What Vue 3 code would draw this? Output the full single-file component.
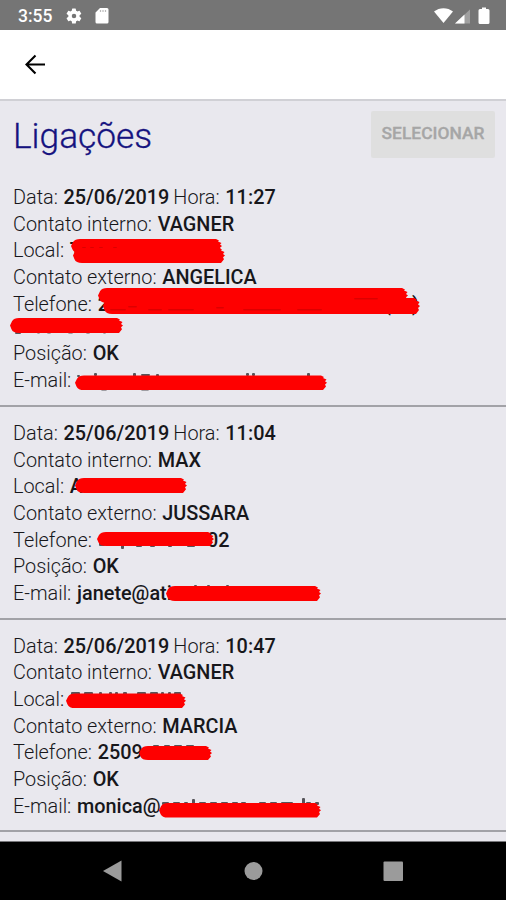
<script setup>
const calls = [
    {
        rows: [
            [['Data:', '25/06/2019'], ['Hora:', '11:27']],
            [['Contato interno:', 'VAGNER']],
            [['Local:', 'T']],
            [['Contato externo:', 'ANGELICA']],
            [['Telefone:', '2']],
            [['Posição:', 'OK']],
            [['E-mail:', '']],
        ],
        double: 4,
        glyphs: [[384, 140, '('], [412, 140, ')']],
        // x, y, width, height of the ink that stays visible around a stroke
        specks: [
            [403, 127, 5, 2], [15, 161, 6, 2], [37, 161, 3, 1.5], [47, 161, 4, 1.5], [68, 161, 5, 1.5],
            [86, 161, 4, 1.5], [103, 161, 3, 1.5], [77, 204, 3, 2], [94, 202, 3, 3], [101, 216, 6, 3.5], [133, 202, 3, 4],
            [141, 203, 9, 2], [141, 216, 8, 3.5], [156, 203, 3, 3], [246, 202, 3, 3], [252, 202, 3, 3], [307, 202, 3, 4],
        ],
        faint: [[110, 138, 16, 1.5], [128, 135, 9, 1.5], [148, 138, 14, 1.5], [168, 138, 26, 1.5], [216, 136, 8, 1.5], [243, 138, 38, 1.5], [297, 138, 25, 1.5], [354, 127, 24, 1.5], [82, 76, 4, 1], [90, 76, 4, 1], [99, 76, 4, 1], [113, 76, 4, 1]],
        strokes: [[71, 68, 151, 14], [73, 77, 152, 15], [98, 117, 310, 15], [103, 127, 317, 16], [10, 147, 113, 15], [75, 204.5, 252, 14.5]],
    },
    {
        rows: [
            [['Data:', '25/06/2019'], ['Hora:', '11:04']],
            [['Contato interno:', 'MAX']],
            [['Local:', 'A']],
            [['Contato externo:', 'JUSSARA']],
            [['Telefone:', '']],
            [['Posição:', 'OK']],
            [['E-mail:', 'janete@ati']],
        ],
        double: -1,
        glyphs: [[207, 140, '02']],
        specks: [
            [99, 135, 6, 4], [121, 137, 3, 5], [136, 138, 6, 2], [150, 138, 5, 2], [168, 138, 4, 2],
            [187, 138, 8, 2], [194, 178, 3, 3], [207, 178, 3, 3], [226, 178, 3, 3], [298, 179, 3, 2],
        ],
        faint: [],
        strokes: [[75, 71, 112, 15], [97, 125, 117, 14], [166, 179, 155, 15]],
    },
    {
        rows: [
            [['Data:', '25/06/2019'], ['Hora:', '10:47']],
            [['Contato interno:', 'VAGNER']],
            [['Local:', '']],
            [['Contato externo:', 'MARCIA']],
            [['Telefone:', '2509']],
            [['Posição:', 'OK']],
            [['E-mail:', 'monica@']],
        ],
        double: -1,
        glyphs: [],
        specks: [
            [71, 72, 9, 3], [84, 72, 9, 3], [99, 72, 3, 3], [109, 72, 3, 3], [115, 72, 3, 3], [123, 72, 4, 3], [137, 72, 9, 3],
            [150, 72, 8, 3], [161, 72, 3, 3], [168, 72, 3, 3], [174, 72, 7, 3], [153, 125, 6, 2], [164, 125, 6, 2], [174, 125, 8, 2],
            [186, 125, 8, 2], [162, 182, 7, 3], [173, 182, 7, 3], [184, 182, 4, 3], [192, 179, 3, 5], [199, 182, 7, 3], [210, 182, 7, 3],
            [221, 182, 7, 3], [232, 182, 6, 3], [241, 182, 5, 3], [259, 182, 7, 3], [270, 182, 7, 3], [281, 182, 12, 3], [302, 178, 3, 7],
            [306, 182, 5, 3], [315, 182, 4, 3],
        ],
        faint: [],
        strokes: [[66, 73.5, 120, 14.5], [139, 126, 73, 14], [159, 183, 162, 14.5]],
    },
]

// marker stroke: soft on the left, frayed on the right
function stroke([x, y, w, h]) {
    const r = x + w
    return `M${x} ${y + h * 0.5} L${x + 2} ${y + h * 0.22} Q${x + 4} ${y} ${x + 9} ${y} L${r - 6} ${y}`
        + ` L${r - 3} ${y + 1.5} L${r - 4} ${y + 2.5} L${r - 0.5} ${y + 4} L${r - 2} ${y + h * 0.4}`
        + ` L${r} ${y + h * 0.5} L${r - 2} ${y + h * 0.62} L${r - 1} ${y + h * 0.75} L${r - 4} ${y + h}`
        + ` L${x + 9} ${y + h} Q${x + 3} ${y + h} ${x + 1.5} ${y + h * 0.75} Z`
}
</script>

<template>
    <div class="phone">
        <div class="status">
            <span class="time">3:55</span>
            <svg class="gear" width="18" height="18" viewBox="0 0 24 24">
                <path fill="#fff" fill-rule="evenodd" d="M19.4 13a7.500 7.500 0 0 0 0-2l2.100-1.600a.5.5 0 0 0 .1-.6l-2-3.500a.5.5 0 0 0-.6-.2l-2.500 1a7.300 7.300 0 0 0-1.700-1l-.4-2.600a.5.5 0 0 0-.5-.5h-4a.5.5 0 0 0-.5.500L9 5.100a7.700 7.700 0 0 0-1.700 1l-2.500-1a.5.5 0 0 0-.6.200l-2 3.500a.5.5 0 0 0 .1.600L4.500 11a7.900 7.900 0 0 0 0 2l-2.200 1.600a.5.5 0 0 0-.1.600l2 3.500c.1.200.4.300.6.200l2.500-1a7.300 7.300 0 0 0 1.700 1l.4 2.600c0 .3.200.5.5.500h4c.3 0 .5-.2.5-.5l.4-2.600a7.700 7.700 0 0 0 1.700-1l2.500 1c.2.1.5 0 .6-.2l2-3.500a.5.5 0 0 0-.1-.6zM12 15a3 3 0 1 1 0-6 3 3 0 0 1 0 6z" />
            </svg>
            <svg class="card" width="14" height="16" viewBox="0 0 14 16">
                <path fill="#fff" d="M5 0h7a1.500 1.500 0 0 1 1.500 1.500v12.500a1.500 1.500 0 0 1-1.500 1.500H2a1.500 1.500 0 0 1-1.500-1.500V4.500z" />
                <path stroke="#bbb" stroke-width="1.200" d="M5.500 2v2M8 2v2M10.500 2v2" />
            </svg>
            <svg class="signals" width="58" height="20" viewBox="0 0 58 20">
                <path fill="#fff" d="M0 5.500C5.500 1 13.500 1 19 5.500L9.500 17z" />
                <path fill="#a0a0a0" d="M36 3.500v14H21z" />
                <path fill="#fff" d="M30.500 8.600v8.900H21z" />
                <path fill="#fff" d="M48 1.500h4v1.500h2a1.500 1.500 0 0 1 1.500 1.500v12a1.500 1.500 0 0 1-1.500 1.500h-8a1.500 1.500 0 0 1-1.500-1.500V4.500a1.500 1.500 0 0 1 1.500-1.500h2z" />
            </svg>
        </div>
        <div class="toolbar">
            <svg width="22" height="22" viewBox="0 0 22 22">
                <path fill="none" stroke="#000" stroke-width="2.100" d="M21 10.500H3M11.500 1.500l-9 9 9 9" />
            </svg>
        </div>
        <main>
            <div class="heading">
                <h1>Ligações</h1>
                <button disabled>SELECIONAR</button>
            </div>
            <div v-for="(call, i) in calls" :key="i" class="call">
                <p v-for="(row, j) in call.rows" :key="j" :class="{ double: j === call.double }">
                    <template v-for="(field, k) in row" :key="k">{{ field[0] }} <b>{{ field[1] }}</b>{{ ' ' }}</template>
                </p>
                <svg class="marker" width="506" height="236" viewBox="0 0 506 236">
                    <text v-for="g in call.glyphs" :key="g[0]" :x="g[0]" :y="g[1]">{{ g[2] }}</text>
                    <rect v-for="(s, n) in call.specks" :key="'s' + n" class="speck" :x="s[0]" :y="s[1]" :width="s[2]" :height="s[3]" rx="1" />
                    <path v-for="(s, n) in call.strokes" :key="'p' + n" class="ink" :d="stroke(s)" />
                    <rect v-for="(s, n) in call.faint" :key="'f' + n" class="faint" :x="s[0]" :y="s[1]" :width="s[2]" :height="s[3]" rx="1" />
                </svg>
            </div>
        </main>
        <nav>
            <svg width="506" height="58" viewBox="0 0 506 58">
                <path fill="#9b9b9b" d="M103 29L121.500 18.500v21z" />
                <circle fill="#9b9b9b" cx="253.500" cy="29" r="9" />
                <rect fill="#9b9b9b" x="383.500" y="19.500" width="19.500" height="19.500" rx="1" />
            </svg>
        </nav>
    </div>
</template>

<style>
body {
    background: #e9e8ee;
}
</style>

<style scoped>
.phone {
    display: flex;
    flex-direction: column;
    width: 506px;
    height: 900px;
    overflow: hidden;
    font-family: Roboto, sans-serif;
    color: #17171b;
    background: #e9e8ee;
}

.status {
    display: flex;
    align-items: center;
    box-sizing: border-box;
    flex: none;
    height: 30px;
    padding: 1px 14px 0 18px;
    background: #757575;
    color: #fff;
}

.time {
    width: 47px;
    font-size: 17.500px;
    font-weight: 500;
}

.card {
    margin-left: 12px;
}

.signals {
    margin-left: auto;
}

.toolbar {
    display: flex;
    align-items: center;
    box-sizing: border-box;
    flex: none;
    height: 71px;
    padding-left: 24px;
    border-bottom: 2px solid #d0d0d5;
    background: #fff;
}

main {
    flex: 1;
    min-height: 0;
}

.heading {
    display: flex;
    justify-content: space-between;
    align-items: flex-start;
    box-sizing: border-box;
    height: 70px;
    padding: 10px 11px 0 13px;
}

h1 {
    margin: 4px 0 0;
    font-size: 35.300px;
    line-height: 42px;
    font-weight: 300;
    -webkit-text-stroke: 0.3px #15127f;
    color: #15127f;
}

button {
    width: 124px;
    height: 47px;
    padding: 0 0 3px;
    border: 0;
    border-radius: 2px;
    background: #dfdfdf;
    color: #a6a6a6;
    font-family: inherit;
    font-size: 17.400px;
    font-weight: 500;
    -webkit-text-stroke: 0.3px #a6a6a6;
}

.call {
    display: flex;
    flex-direction: column;
    gap: 3.650px;
    position: relative;
    padding: 15.200px 13px 12.800px;
    border-bottom: 2px solid #a2a2a7;
}

p {
    height: 23px;
    margin: 0;
    font-size: 19.850px;
    line-height: 23px;
    font-weight: 300;
    white-space: nowrap;
}

p.double {
    height: 46px;
}

b,
.marker text {
    font-size: 19.850px;
    font-weight: 500;
}

b {
    margin: 0 -0.800px 0 0.900px;
}

.marker {
    position: absolute;
    left: 0;
    top: 0;
}

.marker text,
.speck {
    fill: #17171b;
}

.speck {
    opacity: 0.7;
}

.ink {
    fill: #fe0000;
}

.faint {
    fill: #dd0000;
}

nav {
    flex: none;
    height: 58px;
    border-top: 1px solid #77777a;
    background: #000;
}

nav svg {
    display: block;
}
</style>
